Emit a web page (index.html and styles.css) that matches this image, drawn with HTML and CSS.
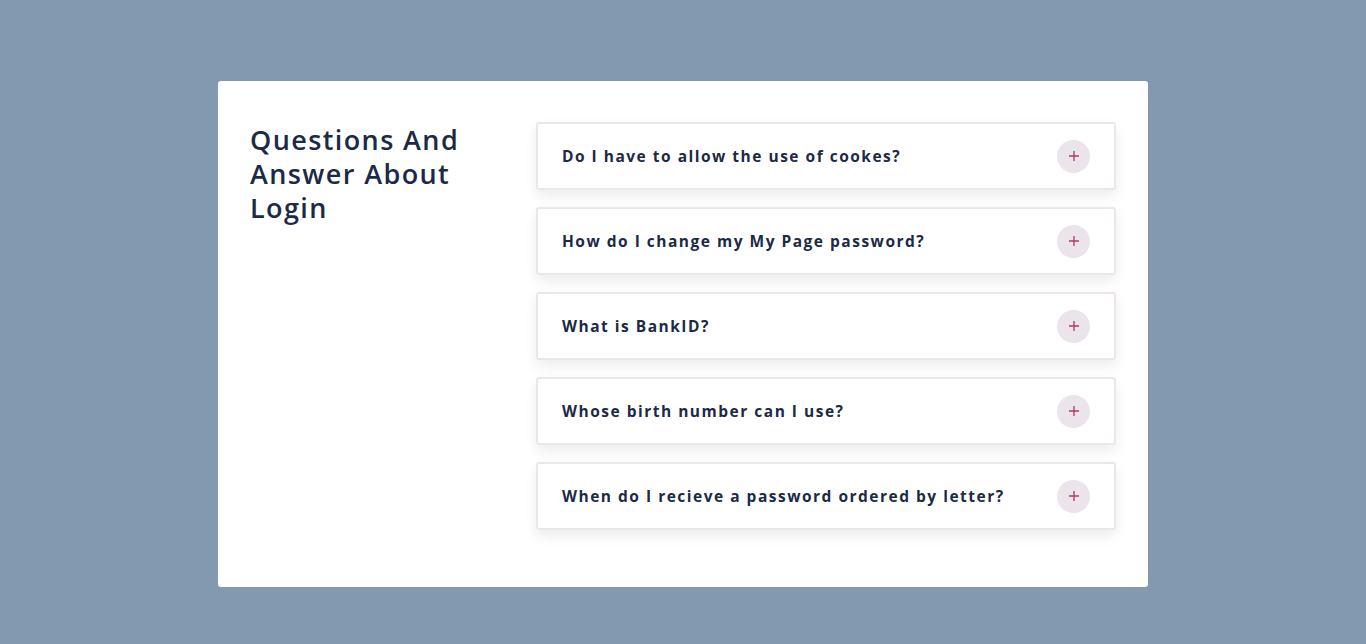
FILE: index.html
```html
<!DOCTYPE html>
<html lang="en">
  <head>
    <meta charset="UTF-8" />
    <meta name="viewport" content="width=device-width, initial-scale=1.0" />
    <title>FAQ</title>
    <link rel="stylesheet" href="styles.css">
  </head>
  <body>
    <div class="faq-card">
      <h1 class="faq-title">Questions And Answer About Login</h1>

      <div class="faq-list">
        <div class="faq-item">
          <h3>Do I have to allow the use of cookes?</h3>
          <button class="faq-toggle">
            <svg viewBox="0 0 12 12" width="12" height="12"><path d="M6 1v10M1 6h10" /></svg>
          </button>
        </div>
        <div class="faq-item">
          <h3>How do I change my My Page password?</h3>
          <button class="faq-toggle">
            <svg viewBox="0 0 12 12" width="12" height="12"><path d="M6 1v10M1 6h10" /></svg>
          </button>
        </div>
        <div class="faq-item">
          <h3>What is BankID?</h3>
          <button class="faq-toggle">
            <svg viewBox="0 0 12 12" width="12" height="12"><path d="M6 1v10M1 6h10" /></svg>
          </button>
        </div>
        <div class="faq-item">
          <h3>Whose birth number can I use?</h3>
          <button class="faq-toggle">
            <svg viewBox="0 0 12 12" width="12" height="12"><path d="M6 1v10M1 6h10" /></svg>
          </button>
        </div>
        <div class="faq-item">
          <h3>When do I recieve a password ordered by letter?</h3>
          <button class="faq-toggle">
            <svg viewBox="0 0 12 12" width="12" height="12"><path d="M6 1v10M1 6h10" /></svg>
          </button>
        </div>
      </div>
    </div>
  </body>
</html>
```

FILE: styles.css
```css
body {
  font-family: "Open Sans", "Noto Sans", sans-serif;
  background-color: #8399b0;
  margin: 0;
  padding: 0;
  color: #1b2a46;
}

.faq-card {
  display: flex;
  gap: 32px;
  width: 930px;
  box-sizing: border-box;
  margin: 81px auto 0;
  padding: 41px 32px 40px;
  background-color: #fff;
  border-radius: 3px;
}

.faq-title {
  width: 254px;
  flex-shrink: 0;
  margin: 1px 0 0;
  font-size: 27px;
  font-weight: 600;
  line-height: 34px;
  letter-spacing: 1.4px;
}

.faq-list {
  flex: 1;
}

.faq-item {
  display: flex;
  align-items: center;
  justify-content: space-between;
  height: 68px;
  box-sizing: border-box;
  padding: 0 24px 0 24px;
  margin-bottom: 17px;
  border: 2px solid #ece6eb;
  border-radius: 3px;
  box-shadow: 0 6px 14px rgba(0, 0, 0, 0.08);
}

.faq-item h3 {
  margin: 0;
  font-size: 15.5px;
  font-weight: 700;
  letter-spacing: 1.5px;
}

.faq-toggle {
  display: flex;
  align-items: center;
  justify-content: center;
  width: 33px;
  height: 33px;
  padding: 0;
  border: none;
  border-radius: 50%;
  background-color: #ebe4ea;
  cursor: pointer;
}

.faq-toggle svg {
  stroke: #b0396a;
  stroke-width: 1.3;
  fill: none;
}
```
